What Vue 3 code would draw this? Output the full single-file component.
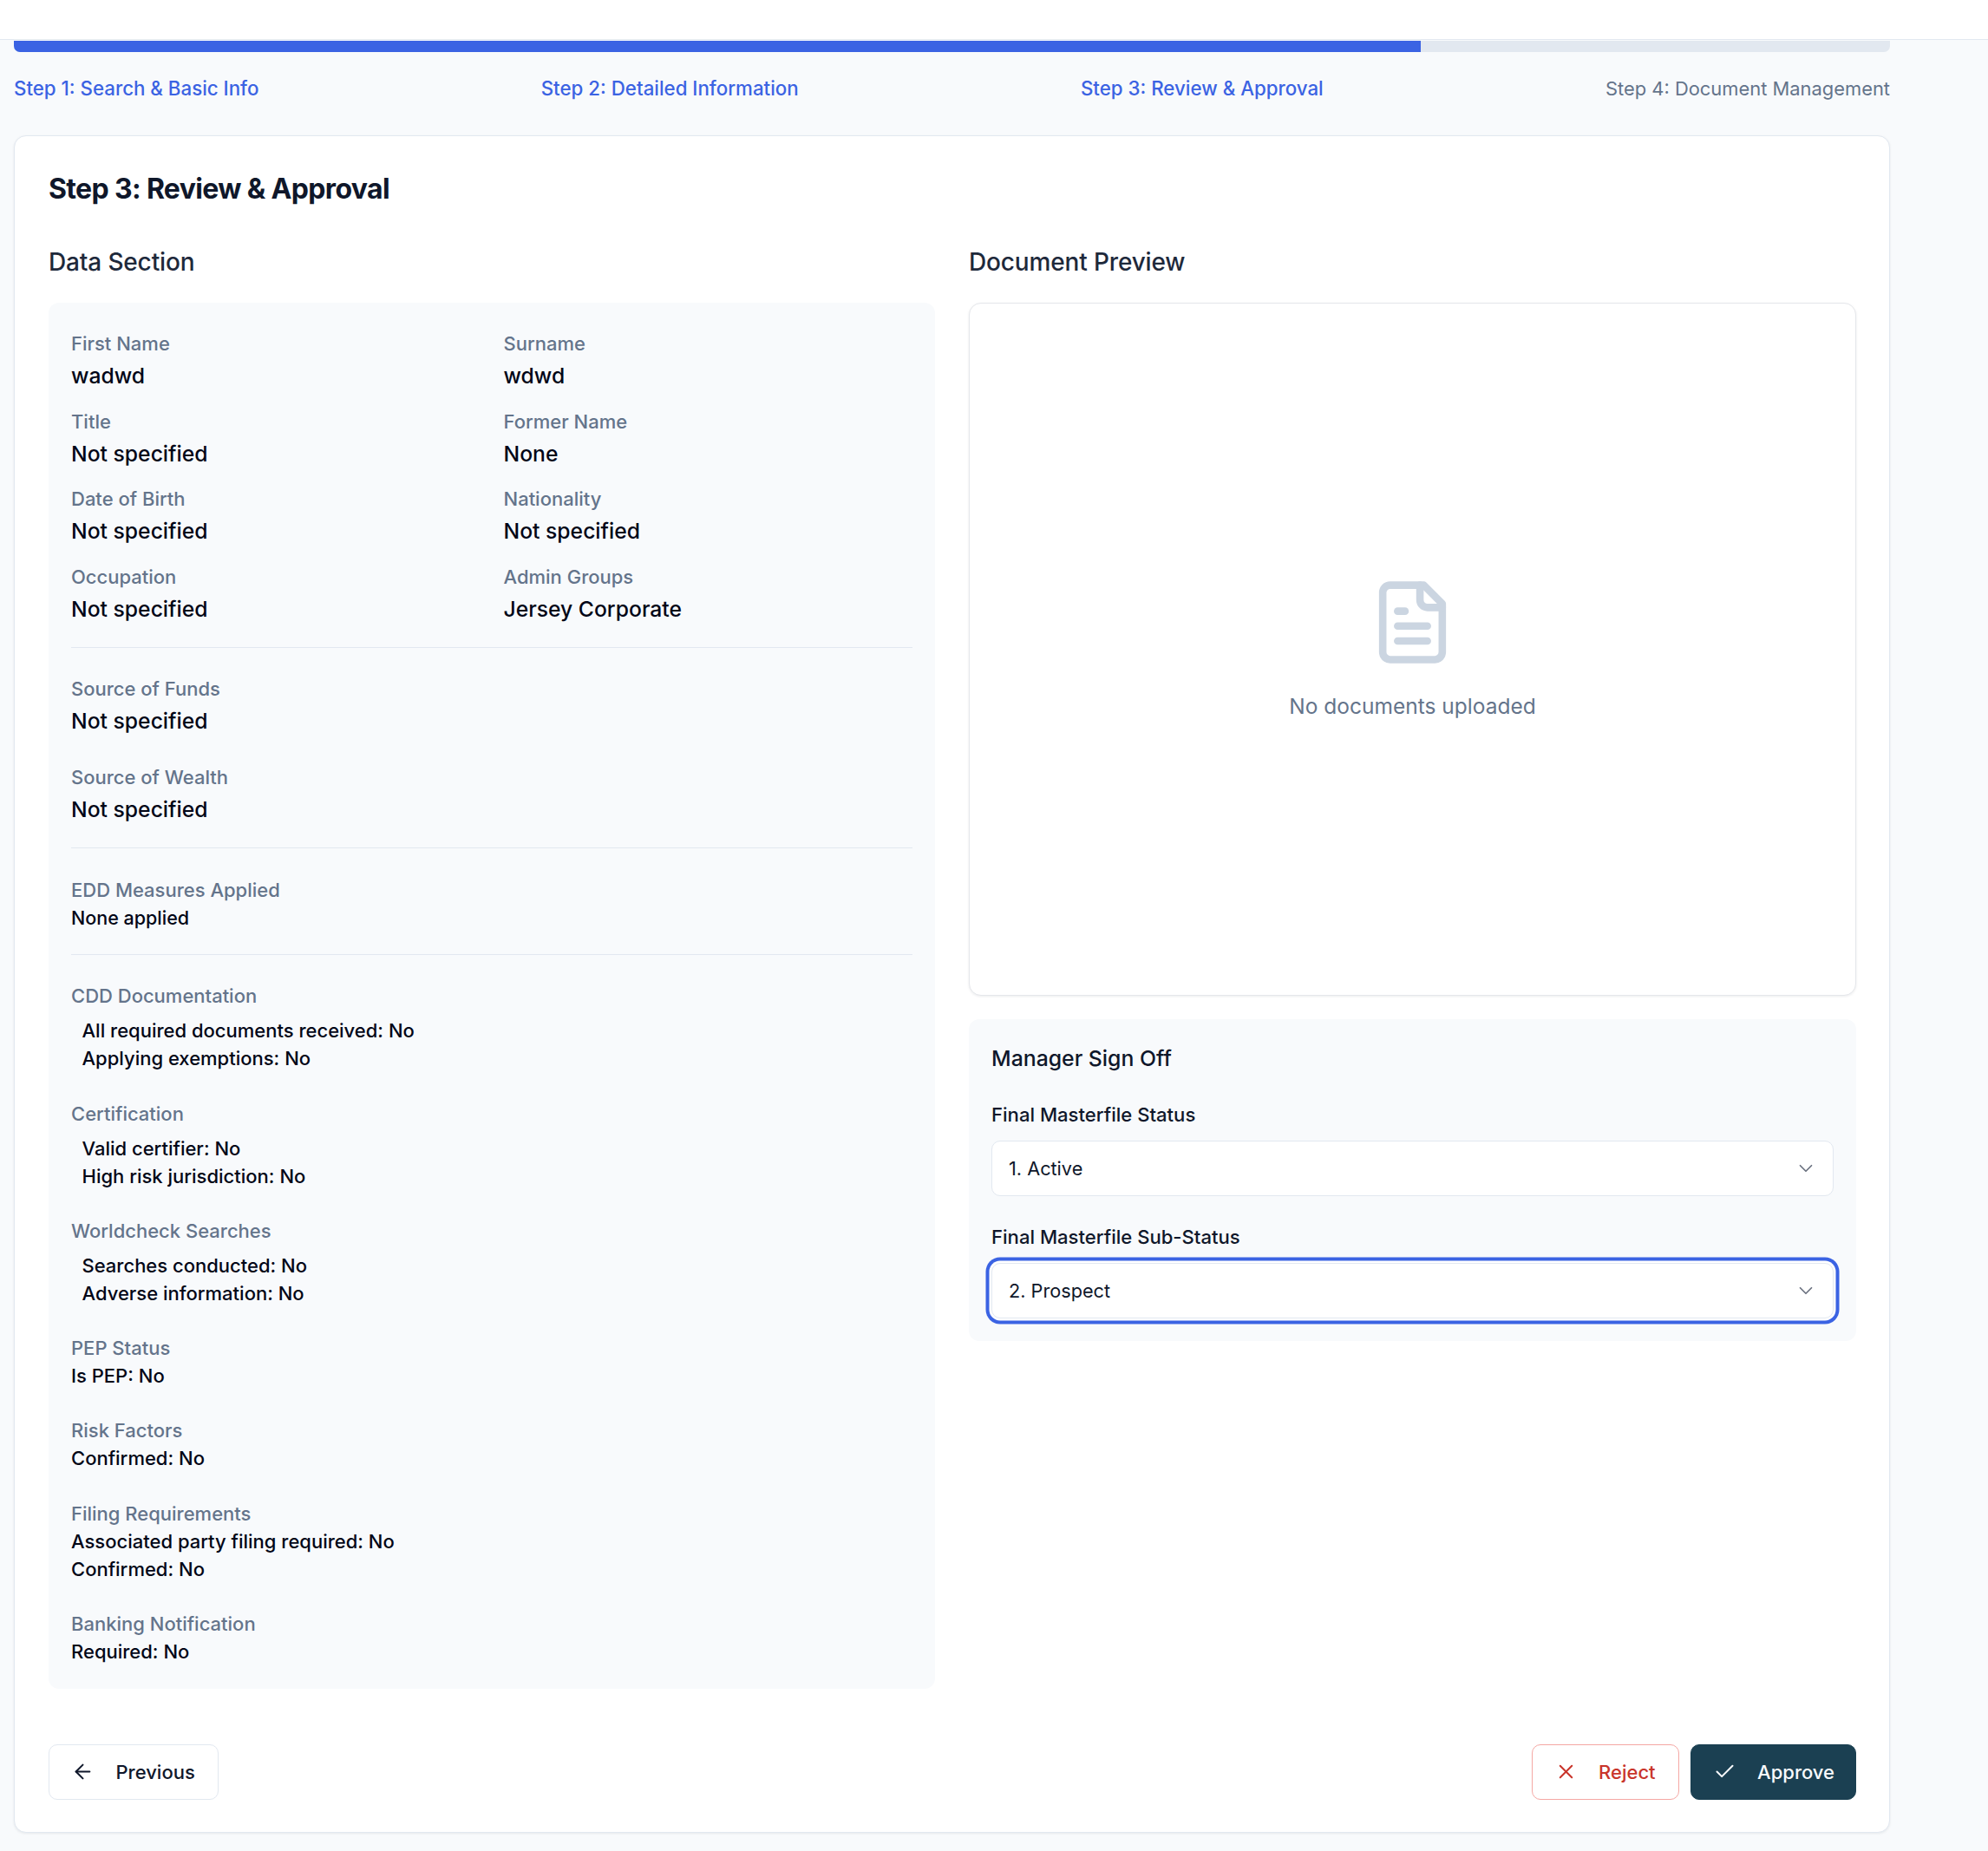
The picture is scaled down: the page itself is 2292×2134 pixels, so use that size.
<script setup>
const steps = [
  { label: 'Step 1: Search & Basic Info', done: true },
  { label: 'Step 2: Detailed Information', done: true },
  { label: 'Step 3: Review & Approval', done: true },
  { label: 'Step 4: Document Management', done: false }
];

const basicFields = [
  { label: 'First Name', value: 'wadwd' },
  { label: 'Surname', value: 'wdwd' },
  { label: 'Title', value: 'Not specified' },
  { label: 'Former Name', value: 'None' },
  { label: 'Date of Birth', value: 'Not specified' },
  { label: 'Nationality', value: 'Not specified' },
  { label: 'Occupation', value: 'Not specified' },
  { label: 'Admin Groups', value: 'Jersey Corporate' }
];

const checkBlocks = [
  { label: 'CDD Documentation', indent: true, lines: ['All required documents received: No', 'Applying exemptions: No'] },
  { label: 'Certification', indent: true, lines: ['Valid certifier: No', 'High risk jurisdiction: No'] },
  { label: 'Worldcheck Searches', indent: true, lines: ['Searches conducted: No', 'Adverse information: No'] },
  { label: 'PEP Status', lines: ['Is PEP: No'] },
  { label: 'Risk Factors', lines: ['Confirmed: No'] },
  { label: 'Filing Requirements', lines: ['Associated party filing required: No', 'Confirmed: No'] },
  { label: 'Banking Notification', lines: ['Required: No'] }
];
</script>

<template>
  <div class="page">
    <div class="topbar"></div>

    <div class="content">
      <div class="progress">
        <div class="progress__fill" style="width: 75%"></div>
      </div>

      <div class="steps">
        <span v-for="step in steps" :key="step.label" :class="{ 'steps__done': step.done }">{{ step.label }}</span>
      </div>

      <div class="card">
        <h1 class="card__title">Step 3: Review &amp; Approval</h1>

        <div class="columns">
          <div>
            <h2 class="col__title">Data Section</h2>
            <div class="panel">
              <div class="field-grid">
                <div v-for="field in basicFields" :key="field.label">
                  <div class="label">{{ field.label }}</div>
                  <div class="value">{{ field.value }}</div>
                </div>
              </div>

              <hr class="divider" />

              <div class="stack">
                <div>
                  <div class="label">Source of Funds</div>
                  <div class="value">Not specified</div>
                </div>
                <div>
                  <div class="label">Source of Wealth</div>
                  <div class="value">Not specified</div>
                </div>
              </div>

              <hr class="divider" />

              <div class="label">EDD Measures Applied</div>
              <div class="line line--small">None applied</div>

              <hr class="divider" />

              <div class="stack">
                <div v-for="block in checkBlocks" :key="block.label">
                  <div class="label">{{ block.label }}</div>
                  <div :class="{ 'indented': block.indent }">
                    <div v-for="line in block.lines" :key="line" class="line">{{ line }}</div>
                  </div>
                </div>
              </div>
            </div>
          </div>

          <div>
            <h2 class="col__title">Document Preview</h2>
            <div class="preview">
              <svg class="preview__icon" viewBox="0 0 24 24" fill="none" stroke="currentColor" stroke-width="2" stroke-linecap="round" stroke-linejoin="round">
                <path d="M15 2H6a2 2 0 0 0-2 2v16a2 2 0 0 0 2 2h12a2 2 0 0 0 2-2V7Z" />
                <path d="M14 2v4a2 2 0 0 0 2 2h4" />
                <path d="M10 9H8" />
                <path d="M16 13H8" />
                <path d="M16 17H8" />
              </svg>
              <div class="preview__text">No documents uploaded</div>
            </div>

            <div class="signoff">
              <h3 class="signoff__title">Manager Sign Off</h3>

              <div class="signoff__label">Final Masterfile Status</div>
              <div class="select">
                <span>1. Active</span>
                <svg class="select__chevron" viewBox="0 0 24 24" fill="none" stroke="currentColor" stroke-width="1.6" stroke-linecap="round" stroke-linejoin="round">
                  <path d="m6 9 6 6 6-6" />
                </svg>
              </div>

              <div class="signoff__label signoff__label--second">Final Masterfile Sub-Status</div>
              <div class="select select--focus">
                <span>2. Prospect</span>
                <svg class="select__chevron" viewBox="0 0 24 24" fill="none" stroke="currentColor" stroke-width="1.6" stroke-linecap="round" stroke-linejoin="round">
                  <path d="m6 9 6 6 6-6" />
                </svg>
              </div>
            </div>
          </div>
        </div>

        <div class="actions">
          <button class="btn">
            <svg class="btn__icon" viewBox="0 0 24 24" fill="none" stroke="currentColor" stroke-linecap="round" stroke-linejoin="round">
              <path d="m12 19-7-7 7-7" />
              <path d="M19 12H5" />
            </svg>
            Previous
          </button>

          <div class="actions__right">
            <button class="btn btn--reject">
              <svg class="btn__icon" viewBox="0 0 24 24" fill="none" stroke="currentColor" stroke-linecap="round" stroke-linejoin="round">
                <path d="M18 6 6 18" />
                <path d="m6 6 12 12" />
              </svg>
              Reject
            </button>
            <button class="btn btn--approve">
              <svg class="btn__icon" viewBox="0 0 24 24" fill="none" stroke="currentColor" stroke-linecap="round" stroke-linejoin="round">
                <path d="M20 6 9 17l-5-5" />
              </svg>
              Approve
            </button>
          </div>
        </div>
      </div>
    </div>
  </div>
</template>

<style scoped>
.page {
  min-height: 2134px;
  background: #f8fafc;
  font-family: Inter, "Liberation Sans", sans-serif;
  color: #0f172a;
}

.topbar {
  height: 45px;
  background: #fff;
  border-bottom: 1px solid #e2e8f0;
}

.content {
  width: 2163px;
  margin-left: 16px;
  padding-top: 1px;
}

.progress {
  height: 13px;
  background: #e2e8f0;
  border-radius: 0 0 7px 7px;
  overflow: hidden;
}

.progress__fill {
  height: 100%;
  background: #3b63e3;
}

.steps {
  display: flex;
  justify-content: space-between;
  margin-top: 25px;
  height: 34px;
  line-height: 34px;
  font-size: 22.3px;
  font-weight: 500;
  color: #64748b;
}

.steps span:last-child {
  font-size: 21.9px;
  font-weight: 400;
}

.steps .steps__done {
  font-weight: 500;
  color: #3b63e3;
}

.card {
  margin-top: 37px;
  padding: 39px 38px 37px 39px;
  background: #fff;
  border: 1px solid #e2e8f0;
  border-radius: 14px;
  box-shadow: 0 1px 3px rgba(15, 23, 42, 0.08);
}

.card__title {
  margin: 0 0 42px;
  font-size: 32px;
  line-height: 44px;
  font-weight: 700;
  letter-spacing: -0.65px;
}

.columns {
  display: grid;
  grid-template-columns: 1022px 1023px;
  gap: 39px;
  align-items: start;
}

.col__title {
  margin: 0 0 27px;
  font-size: 28px;
  line-height: 40px;
  font-weight: 500;
  letter-spacing: -0.15px;
  color: #1e293b;
}

.panel {
  padding: 31px 26px 26.6px;
  background: #f8fafc;
  border-radius: 12px;
}

.field-grid {
  display: grid;
  grid-template-columns: 1fr 1fr;
  column-gap: 27px;
  row-gap: 18.5px;
}

.label {
  font-size: 22px;
  line-height: 32px;
  color: #64748b;
  font-weight: 500;
}

.value {
  margin-top: 3px;
  font-size: 24.7px;
  line-height: 36px;
  font-weight: 500;
  color: #020617;
}

.divider {
  margin: 26px 0 31.5px;
  border: 0;
  border-top: 1px solid #e2e8f0;
}

.stack {
  display: flex;
  flex-direction: column;
  gap: 31.3px;
}

.line {
  font-size: 22px;
  line-height: 32px;
  font-weight: 500;
  color: #020617;
}

.line--small {
  font-size: 21.5px;
}

.indented {
  margin-top: 8px;
  padding-left: 12.5px;
}

.preview {
  display: flex;
  flex-direction: column;
  align-items: center;
  justify-content: center;
  gap: 27px;
  height: 799px;
  box-sizing: border-box;
  background: #fff;
  border: 1px solid #e5e7eb;
  border-radius: 14px;
  box-shadow: 0 1px 3px rgba(15, 23, 42, 0.08);
}

.preview__icon {
  width: 103px;
  height: 103px;
  color: #cbd5e1;
}

.preview__text {
  font-size: 24.5px;
  line-height: 36px;
  color: #64748b;
}

.signoff {
  margin-top: 27px;
  padding: 27px 26px 26px;
  background: #f8fafc;
  border-radius: 12px;
}

.signoff__title {
  margin: 0 0 32px;
  font-size: 24.8px;
  line-height: 36px;
  font-weight: 500;
  color: #0f172a;
}

.signoff__label {
  margin-bottom: 15px;
  font-size: 22.1px;
  line-height: 30px;
  font-weight: 500;
}

.signoff__label--second {
  margin-top: 32px;
}

.select {
  display: flex;
  align-items: center;
  justify-content: space-between;
  height: 64px;
  box-sizing: border-box;
  padding: 0 18px 0 19px;
  background: #fff;
  border: 1px solid #e2e8f0;
  border-radius: 10px;
  font-size: 21.7px;
  color: #0f172a;
}

.select--focus {
  box-shadow: 0 0 0 2.5px #fff, 0 0 0 6.5px #3b63e3;
}

.select__chevron {
  width: 26px;
  height: 26px;
  color: #6b7280;
}

.actions {
  display: flex;
  justify-content: space-between;
  margin-top: 64px;
}

.actions__right {
  display: flex;
  gap: 13px;
}

.btn {
  display: flex;
  align-items: center;
  gap: 24.5px;
  height: 64px;
  box-sizing: border-box;
  padding: 0 26px 0 25px;
  background: #fff;
  border: 1px solid #e2e8f0;
  border-radius: 10px;
  font-family: inherit;
  font-size: 22px;
  font-weight: 500;
  color: #0f172a;
}

.btn__icon {
  width: 27px;
  height: 27px;
  stroke-width: 1.8;
}

.btn--reject {
  border-color: #f5a8a4;
  color: #c9352b;
}

.btn--approve {
  padding-right: 24px;
  background: #1b4052;
  border-color: #1b4052;
  color: #f8fafc;
}
</style>

<style>
body {
  background: #f8fafc;
}
</style>
